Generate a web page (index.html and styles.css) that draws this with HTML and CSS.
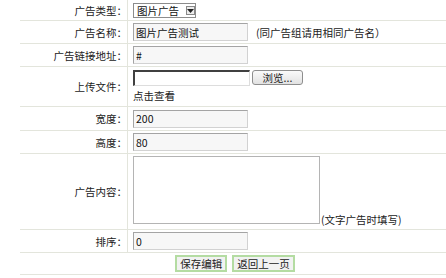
FILE: index.html
```html
<!DOCTYPE html>
<html lang="zh-CN">
<head>
    <meta charset="UTF-8">
    <title>编辑广告</title>
    <link rel="stylesheet" href="styles.css">
</head>
<body>
    <div class="ad-form">
        <div class="row row-type">
            <div class="label">广告类型：</div>
            <div class="value">
                <span class="select-box">
                    <select class="select">
                        <option selected>图片广告</option>
                        <option>文字广告</option>
                    </select>
                    <span class="select-arrow">
                        <svg width="7" height="4" viewBox="0 0 7 4"><path d="M0 0h7L3.5 4z" fill="#222"/></svg>
                    </span>
                </span>
            </div>
        </div>

        <div class="row">
            <div class="label">广告名称：</div>
            <div class="value">
                <input type="text" class="text" value="图片广告测试">
                <span class="hint">(同广告组请用相同广告名）</span>
            </div>
        </div>

        <div class="row">
            <div class="label">广告链接地址：</div>
            <div class="value">
                <input type="text" class="text" value="#">
            </div>
        </div>

        <div class="row row-file">
            <div class="label">上传文件：</div>
            <div class="value">
                <div class="file-line">
                    <span class="file-box"></span>
                    <button class="browse">浏览...</button>
                </div>
                <div class="view-link">点击查看</div>
            </div>
        </div>

        <div class="row row-width">
            <div class="label">宽度：</div>
            <div class="value">
                <input type="text" class="text" value="200">
            </div>
        </div>

        <div class="row">
            <div class="label">高度：</div>
            <div class="value">
                <input type="text" class="text" value="80">
            </div>
        </div>

        <div class="row row-content">
            <div class="label">广告内容：</div>
            <div class="value">
                <textarea class="content"></textarea><span class="hint-inline">(文字广告时填写)</span>
            </div>
        </div>

        <div class="row">
            <div class="label">排序：</div>
            <div class="value">
                <input type="text" class="text" value="0">
            </div>
        </div>

        <div class="row row-actions">
            <button class="action">保存编辑</button>
            <button class="action">返回上一页</button>
        </div>
    </div>
</body>
</html>
```

FILE: styles.css
```css
body {
    margin: 0;
    font-family: "Noto Sans CJK SC", "Liberation Sans", sans-serif;
    font-size: 10.5px;
    color: #222;
    background-color: #fff;
}

.ad-form {
    margin-left: 20px;
}

.row {
    display: flex;
    height: 23px;
    border-bottom: 1px solid #e3e5dc;
    box-sizing: border-box;
}

.row-type {
    height: 21px;
}

.row-file {
    height: 40px;
}

.row-width {
    height: 24px;
}

.row-content {
    height: 76px;
}

.row-actions {
    height: 22px;
    justify-content: center;
    align-items: center;
    gap: 5px;
    padding-left: 4px;
}

.label {
    width: 108px;
    box-sizing: border-box;
    border-right: 1px solid #e3e5dc;
    padding-right: 0;
    display: flex;
    align-items: center;
    justify-content: flex-end;
    white-space: nowrap;
}

.value {
    flex: 1;
    padding-left: 5px;
    display: flex;
    align-items: center;
    white-space: nowrap;
}

.row-file .value,
.row-content .value {
    display: block;
    align-self: center;
}

.text {
    width: 115px;
    height: 18px;
    box-sizing: border-box;
    margin: 0;
    padding: 0 2px;
    border: 1px solid #d2d2d2;
    border-top-color: #a4a4a4;
    border-left-color: #a4a4a4;
    background-color: #f7f7f7;
    font-family: inherit;
    font-size: 10.5px;
    color: #111;
}

.hint {
    margin-left: 8px;
}

.select-box {
    display: flex;
    align-items: center;
    width: 63px;
    height: 15px;
    box-sizing: border-box;
    border: 1px solid #8c8c8c;
    background-color: #fff;
}

.select {
    appearance: none;
    -webkit-appearance: none;
    border: none;
    background: transparent;
    margin: 0;
    padding: 0 0 0 3px;
    width: 52px;
    font-family: inherit;
    font-size: 10.5px;
    color: #111;
}

.select-arrow {
    width: 9px;
    height: 9px;
    box-sizing: border-box;
    border: 1px solid #888;
    background-color: #ececec;
    display: flex;
    align-items: flex-end;
    justify-content: center;
    padding-bottom: 1px;
}

.file-line {
    display: flex;
    align-items: center;
    gap: 2px;
}

.file-box {
    width: 117px;
    height: 16px;
    box-sizing: border-box;
    border: 1px solid #ddd;
    border-top: 2px solid #404040;
    border-left: 2px solid #404040;
    background-color: #fff;
}

.browse {
    width: 51px;
    height: 15px;
    padding: 0;
    border: 1px solid #8e8e8e;
    border-radius: 3px;
    background: linear-gradient(#fafafa, #e2e2e2);
    font-family: inherit;
    font-size: 10.5px;
    line-height: 12px;
    color: #222;
}

.view-link {
    margin-top: 2px;
    line-height: 16px;
}

.content {
    width: 187px;
    height: 68px;
    box-sizing: border-box;
    margin: 0;
    border: 1px solid #b4b4b4;
    resize: none;
    background-color: #fff;
    vertical-align: baseline;
}

.hint-inline {
    margin-left: 1px;
}

.action {
    height: 17px;
    padding: 0 3px;
    border: 2px solid #b4dca2;
    background-color: #f2f2f2;
    font-family: inherit;
    font-size: 10.5px;
    line-height: 12px;
    color: #222;
}
```
